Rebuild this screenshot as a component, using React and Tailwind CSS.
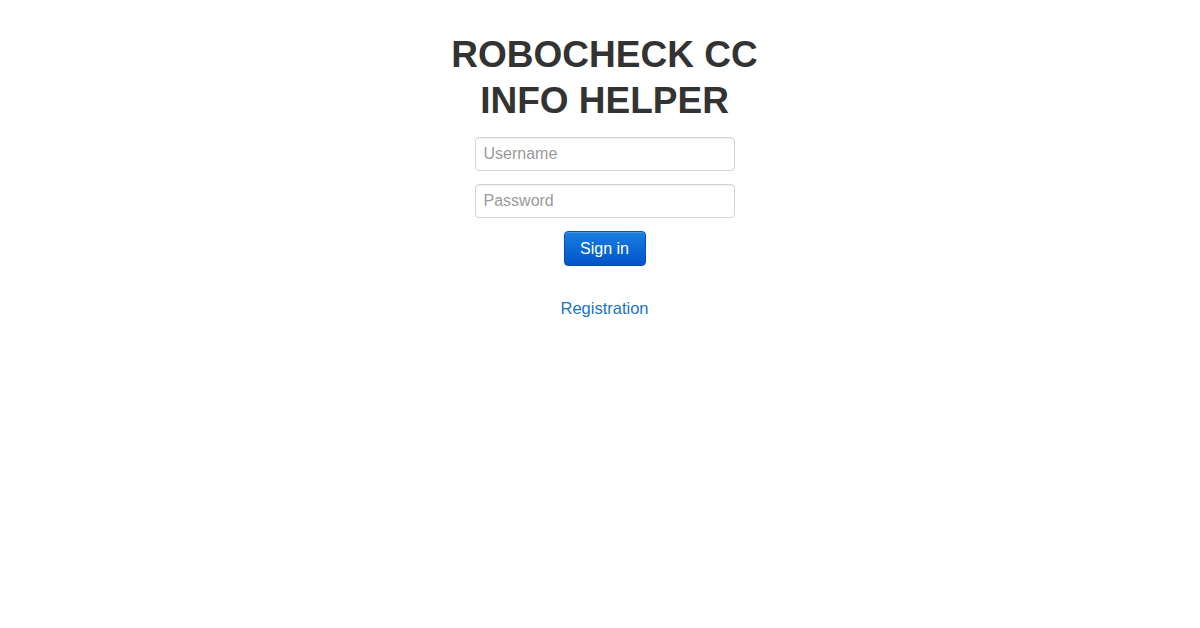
export default function App() {
  return (
    <div className="min-h-screen bg-white font-['Liberation_Sans',Arial,sans-serif]">
      <div className="flex flex-col items-center pl-[9px] pt-[32px]">
        <h1 className="text-center text-[37px] font-bold leading-[46px] text-[#333333]">
          ROBOCHECK CC
          <br />
          INFO HELPER
        </h1>
        <form className="mt-[13px] flex flex-col items-center gap-[13px]" onSubmit={e => e.preventDefault()}>
          <input
            type="text"
            placeholder="Username"
            className="h-[34px] w-[260px] rounded-[4px] border border-[#d4d4d4] px-[8px] text-[16px] text-[#555] shadow-[inset_0_1px_1px_rgba(0,0,0,0.075)] outline-none placeholder:text-[#9a9a9a]"
          />
          <input
            type="password"
            placeholder="Password"
            className="h-[34px] w-[260px] rounded-[4px] border border-[#d4d4d4] px-[8px] text-[16px] text-[#555] shadow-[inset_0_1px_1px_rgba(0,0,0,0.075)] outline-none placeholder:text-[#9a9a9a]"
          />
          <button
            type="submit"
            className="h-[35px] w-[82px] rounded-[4px] border border-[#0a4fb8] bg-gradient-to-b from-[#1a7fe0] to-[#0453c9] text-[16px] text-white shadow-[inset_0_1px_0_rgba(255,255,255,0.2)]"
          >
            Sign in
          </button>
        </form>
        <a href="#" className="mt-[32px] text-[16.5px] leading-[20px] text-[#1a73c7]">
          Registration
        </a>
      </div>
    </div>
  )
}
